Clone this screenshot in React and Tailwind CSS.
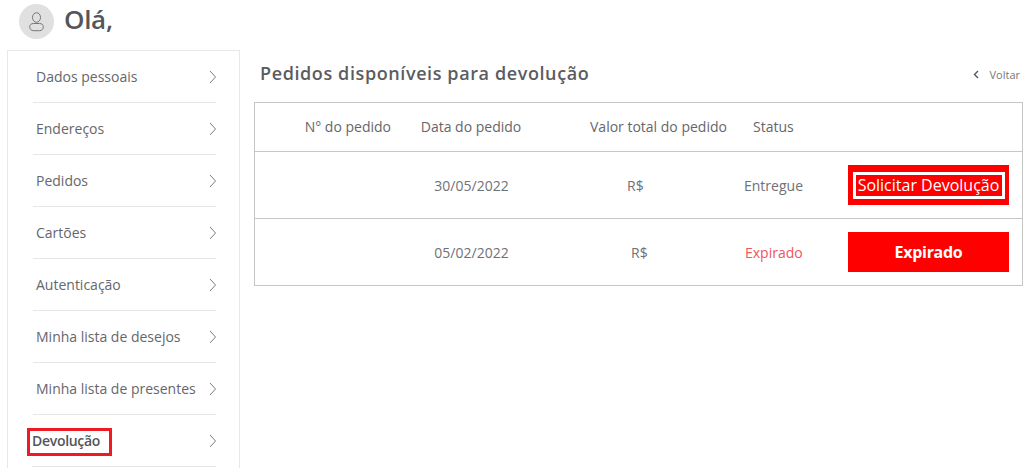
const items = ["Dados pessoais","Endereços","Pedidos","Cartões","Autenticação","Minha lista de desejos","Minha lista de presentes"];

function Chevron() {
  return (
    <svg width="7" height="14" viewBox="0 0 7 14" fill="none" className="shrink-0">
      <path d="M1 1l5.500 6-5.500 6" stroke="#7b7b7b" strokeWidth="1" />
    </svg>
  );
}

function Row({ h, border, children }) {
  return <div className={`flex items-center text-[14px] ${h} ${border ? "border-b border-[#c6c6c6]" : ""}`}>{children}</div>;
}

export default function App() {
  return (
    <div className="w-[1028px] h-[468px] overflow-hidden bg-white text-[#5b5b5f] font-['Open_Sans',sans-serif]">
      <div className="flex items-center h-[43px] pl-[19px]">
        <div className="w-[35px] h-[35px] rounded-full bg-[#e0e0e0] flex items-center justify-center">
          <svg width="15" height="20" viewBox="0 0 15 20" fill="none" stroke="#77777b" strokeWidth="1">
            <ellipse cx="7.500" cy="5.500" rx="4" ry="4.800" />
            <path d="M4.500 11.500h6c2.300 0 3.800 1.300 3.800 3.200v0c0 2.300-1.500 4-3.800 4h-6c-2.300 0-3.800-1.700-3.800-4v0c0-1.900 1.500-3.200 3.800-3.200z" />
          </svg>
        </div>
        <div className="ml-[10px] -mt-[5px] text-[26px] leading-[34px] font-semibold tracking-[-0.3px] text-[#55555a]">Olá,</div>
      </div>
      <div className="flex items-start pl-[7px] pt-[7px]">
        <div className="w-[233px] h-[430px] border border-[#e8e8e8] pl-[25px] pr-[23px] shrink-0">
          {items.map((t) => (
            <div key={t} className="h-[52px] border-b border-[#e6e6e6] flex items-center justify-between pl-[3px] text-[14px] text-[#66666c]">
              <span>{t}</span>
              <Chevron />
            </div>
          ))}
          <div className="relative h-[52px] border-b border-[#e6e6e6] flex items-center justify-between text-[14px] font-semibold tracking-[-0.3px] text-[#55555a] -ml-[1px]">
            <span>Devolução</span>
            <Chevron />
            <div className="absolute left-[-5px] top-[13px] w-[85px] h-[28px] border-[3px] border-[#ed1c24]"></div>
          </div>
        </div>
        <div className="ml-[14px] w-[769px]">
          <div className="h-[52px] flex items-start justify-between">
            <h1 className="ml-[6px] mt-[10px] text-[18px] leading-[26px] font-semibold tracking-[0.6px] text-[#5c5c60]">Pedidos disponíveis para devolução</h1>
            <div className="flex items-center mt-[17px] mr-[3px] text-[11px] leading-[15px] text-[#77777d]">
              <svg width="6" height="9" viewBox="0 0 6 9" fill="none" className="mr-[11px]">
                <path d="M5 1L1.500 4.500 5 8" stroke="#55555a" strokeWidth="1.400" />
              </svg>
              Voltar
            </div>
          </div>
          <div className="border border-[#c6c6c6] h-[184px]">
            <Row h="h-[49px] pb-[2px]" border>
              <div className="w-[150px] text-right pr-[14px] text-[#66666a]">N° do pedido</div>
              <div className="w-[132px] text-center text-[#66666a]">Data do pedido</div>
              <div className="w-[203px] pl-[53px] text-[#66666a]">Valor total do pedido</div>
              <div className="w-[108px] pl-[13px] text-[#66666a]">Status</div>
            </Row>
            <Row h="h-[67px]" border>
              <div className="w-[150px]"></div>
              <div className="w-[132px] text-center pl-[1px] text-[#707076]">30/05/2022</div>
              <div className="w-[203px] pl-[90px] text-[#707076]">R$</div>
              <div className="w-[108px] pl-[4px] text-[#707076]">Entregue</div>
              <div className="w-[161px] h-[40px] bg-[#ff0000] flex items-center justify-center">
                <div className="w-[152px] h-[27px] border-[3px] border-white text-white text-[16px] leading-[21px] flex items-center justify-center whitespace-nowrap">Solicitar Devolução</div>
              </div>
            </Row>
            <Row h="h-[66px]">
              <div className="w-[150px]"></div>
              <div className="w-[132px] text-center pl-[1px] text-[#707076]">05/02/2022</div>
              <div className="w-[203px] pl-[94px] text-[#707076]">R$</div>
              <div className="w-[108px] pl-[5px] text-[#ee5560]">Expirado</div>
              <div className="w-[161px] h-[40px] bg-[#ff0000] flex items-center justify-center text-white text-[16px] font-bold tracking-[-0.3px]">Expirado</div>
            </Row>
          </div>
        </div>
      </div>
    </div>
  );
}
